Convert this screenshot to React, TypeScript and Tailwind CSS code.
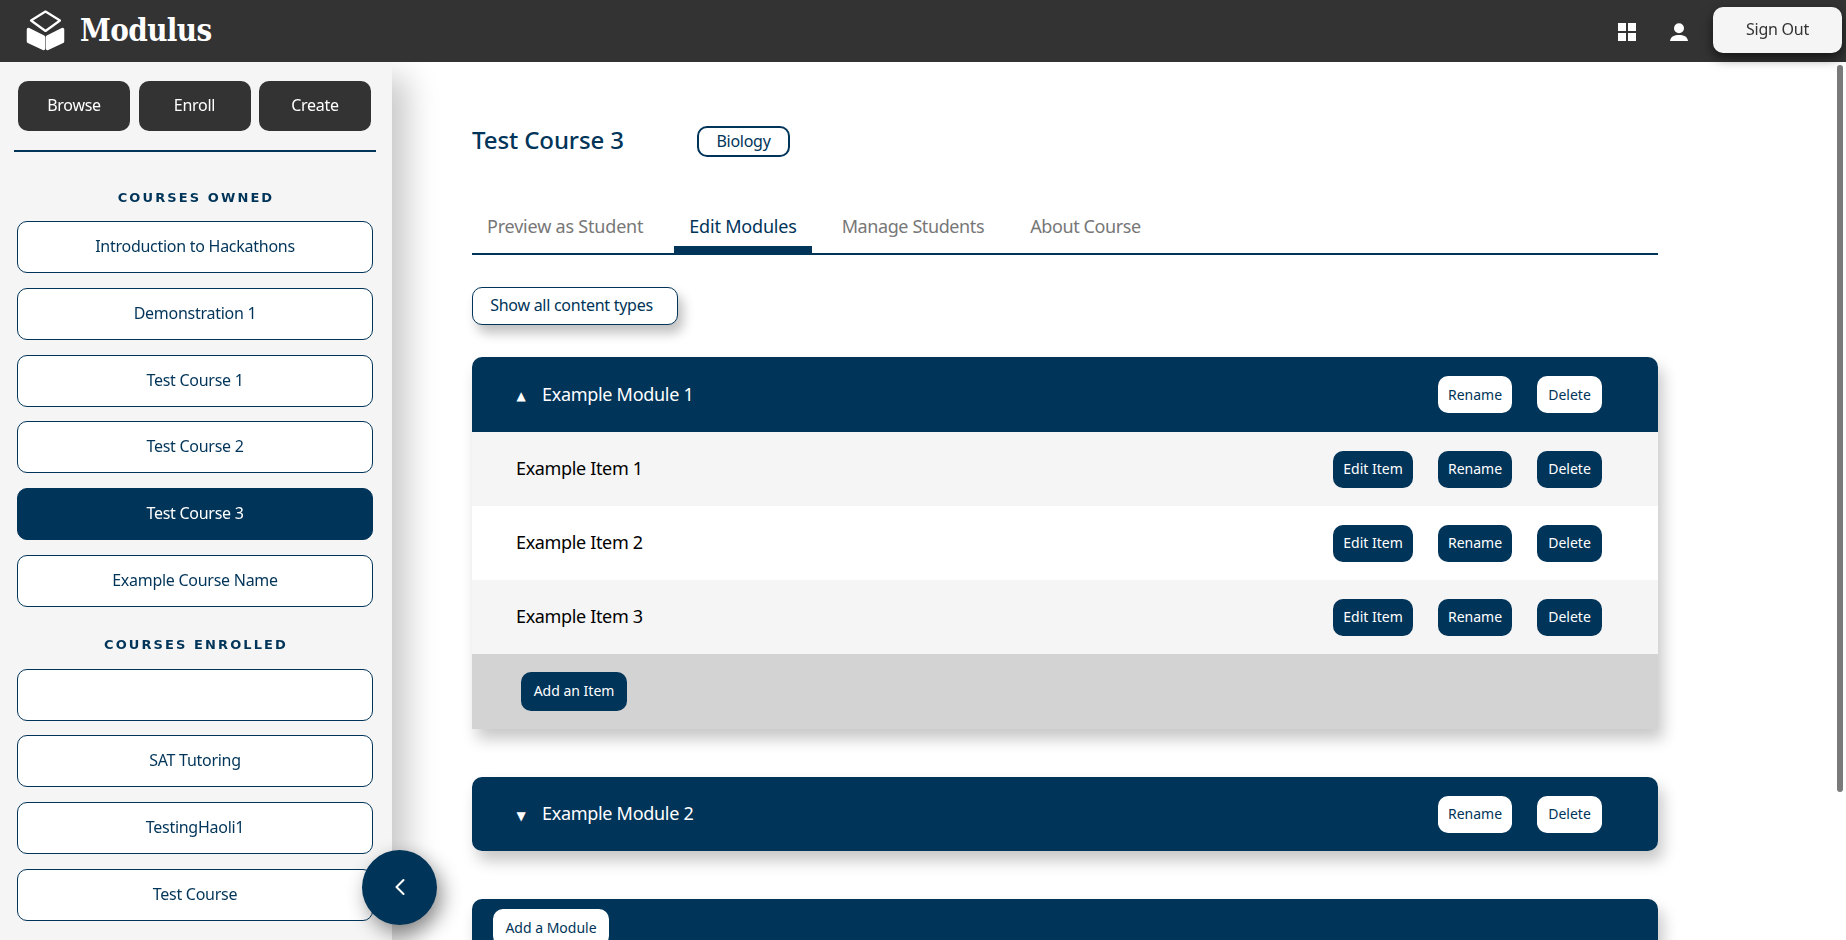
import { ChevronLeft } from "lucide-react";

const FONT = "font-['Noto_Sans',sans-serif]";

function LogoMark() {
  return (
    <svg width="39" height="41" viewBox="0 0 39 41" className="shrink-0 mb-[2px]">
      <path d="M19.5 1.5 L34 10.5 L19.5 21 L5 10.5 Z" fill="none" stroke="white" strokeWidth="2.2" strokeLinejoin="round" />
      <path d="M2.5 19.5 L17.5 27 L17.5 38.5 L2.5 31.5 Z" fill="white" stroke="white" strokeWidth="3.5" strokeLinejoin="round" />
      <path d="M21.5 27 L36.5 19.5 L36.5 31.5 L21.5 38.5 Z" fill="white" stroke="white" strokeWidth="3.5" strokeLinejoin="round" />
    </svg>
  );
}

function Header() {
  return (
    <header className="h-[62px] shrink-0 bg-[#333333] flex items-center justify-between pl-[26px] pr-[4px] relative z-20">
      <div className="flex items-center gap-[15px]">
        <LogoMark />
        <span className="font-['DejaVu_Serif',serif] font-bold [font-stretch:condensed] text-[31px] tracking-[-0.6px] text-white leading-none pb-[2px]">Modulus</span>
      </div>
      <div className="flex items-center">
        <svg width="18" height="18" viewBox="0 0 18 18" fill="white" className="mt-[2px]">
          <rect x="0" y="0" width="8" height="8" />
          <rect x="10" y="0" width="8" height="8" />
          <rect x="0" y="10" width="8" height="8" />
          <rect x="10" y="10" width="8" height="8" />
        </svg>
        <svg width="18" height="18" viewBox="0 0 18 18" fill="white" className="ml-[34px] mt-[2px]">
          <circle cx="9" cy="5.2" r="5" />
          <path d="M0 18 C0.5 13.5 4.5 12 9 12 C13.5 12 17.5 13.5 18 18 Z" />
        </svg>
        <button className="ml-[25px] mb-[2px] w-[129px] h-[46px] rounded-[10px] bg-[#f5f5f5] text-[#333333] text-[16px] tracking-[-0.27px] pb-[2px] shadow-[0_5px_12px_rgba(0,0,0,0.6)]">
          Sign Out
        </button>
      </div>
    </header>
  );
}

function CourseItem({ label, active }: { label: string; active?: boolean }) {
  return (
    <button
      className={
        active
          ? "h-[52px] w-full rounded-[10px] border border-[#003459] bg-[#003459] text-white text-[16px] tracking-[-0.27px] pb-[2px]"
          : "h-[52px] w-full rounded-[10px] border border-[#003459] bg-white text-[#003459] text-[16px] tracking-[-0.27px] pb-[2px]"
      }
    >
      {label}
    </button>
  );
}

function Sidebar() {
  const owned = ["Introduction to Hackathons", "Demonstration 1", "Test Course 1", "Test Course 2", "Test Course 3", "Example Course Name"];
  const enrolled = ["", "SAT Tutoring", "TestingHaoli1", "Test Course"];
  return (
    <aside className="w-[392px] shrink-0 bg-[#f5f5f5] relative z-10 shadow-[15px_15px_30px_rgba(0,0,0,0.22)] pt-[19px]">
      <div className="grid grid-cols-3 gap-[8.5px] mx-[18px] w-[353px]">
        {["Browse", "Enroll", "Create"].map((t) => (
          <button key={t} className="h-[50px] rounded-[10px] bg-[#333333] text-white text-[16px] tracking-[-0.27px] pb-[2px]">
            {t}
          </button>
        ))}
      </div>
      <div className="h-[2px] bg-[#003459] mx-[14px] w-[362px] mt-[19px]" />
      <h2 className="font-['DejaVu_Sans',sans-serif] font-bold text-[13px] leading-[20px] tracking-[2.1px] text-center text-[#003459] mt-[36px] mb-[13px]">
        COURSES OWNED
      </h2>
      <div className="flex flex-col gap-[14.8px] mx-[17px] w-[356px]">
        {owned.map((c) => (
          <CourseItem key={c} label={c} active={c === "Test Course 3"} />
        ))}
      </div>
      <h2 className="font-['DejaVu_Sans',sans-serif] font-bold text-[13px] leading-[20px] tracking-[2.1px] text-center text-[#003459] mt-[28px] mb-[13.7px]">
        COURSES ENROLLED
      </h2>
      <div className="flex flex-col gap-[14.8px] mx-[17px] w-[356px]">
        {enrolled.map((c, i) => (
          <CourseItem key={i} label={c} />
        ))}
      </div>
      <button className="absolute left-[362px] bottom-[15px] w-[75px] h-[75px] rounded-full bg-[#003459] flex items-center justify-center text-white shadow-[5px_8px_20px_rgba(0,0,0,0.45)]">
        <ChevronLeft size={28} strokeWidth={1.8} className="mb-[2px]" />
      </button>
    </aside>
  );
}

function NavyBtn({ label, w }: { label: string; w: string }) {
  return <button className={`${w} h-[37px] rounded-[10px] bg-[#003459] text-white text-[14px] pb-[2px]`}>{label}</button>;
}

function WhiteBtn({ label, w }: { label: string; w: string }) {
  return <button className={`${w} h-[37px] rounded-[10px] bg-white text-[#003459] text-[14px] pb-[1px]`}>{label}</button>;
}

function ModuleHeader({ title, arrow, h }: { title: string; arrow: string; h: string }) {
  return (
    <div className={`${h} bg-[#003459] rounded-t-[10px] flex items-center justify-between pl-[44px] pr-[56px] text-white`}>
      <div className="flex items-center gap-[16px]">
        <span className="font-['DejaVu_Sans',sans-serif] text-[12px] w-[10px] flex justify-center pt-[3px]">{arrow}</span>
        <span className="text-[18px] tracking-[-0.3px] pb-[1px]">{title}</span>
      </div>
      <div className="flex items-center gap-[25px]">
        <WhiteBtn label="Rename" w="w-[74px]" />
        <WhiteBtn label="Delete" w="w-[65px]" />
      </div>
    </div>
  );
}

function ItemRow({ label, shaded }: { label: string; shaded: boolean }) {
  return (
    <div className={shaded ? "h-[74px] bg-[#f5f5f5] flex items-center justify-between pl-[44px] pr-[56px]" : "h-[74px] bg-white flex items-center justify-between pl-[44px] pr-[56px]"}>
      <span className="text-[18px] tracking-[-0.35px] text-black pb-[2px]">{label}</span>
      <div className="flex items-center gap-[25px]">
        <NavyBtn label="Edit Item" w="w-[80px]" />
        <NavyBtn label="Rename" w="w-[74px]" />
        <NavyBtn label="Delete" w="w-[65px]" />
      </div>
    </div>
  );
}

function Main() {
  const moduleShadow = "shadow-[5px_10px_15px_rgba(0,0,0,0.22)]";
  const tab = "h-[45px] px-[15px] text-[18px] pb-[2px] border-b-[7px]";
  return (
    <main className="flex-1 min-w-0 bg-white overflow-y-auto">
      <div className="ml-[80px] w-[1186px] pt-[64px] pb-[141px]">
        <div className="flex items-center h-[31px]">
          <h1 className="text-[24px] font-medium text-[#003459] w-[225px] leading-none pb-[4px] tracking-[-0.1px]">Test Course 3</h1>
          <span className="w-[93px] h-[31px] rounded-[10px] border-2 border-[#003459] text-[#003459] text-[16px] tracking-[-0.27px] flex items-center justify-center pb-[1px]">
            Biology
          </span>
        </div>
        <nav className="flex gap-4 border-b-2 border-[#003459] mt-[51px]">
          <button className={`${tab} tracking-[-0.2px] text-[#777777] border-transparent`}>Preview as Student</button>
          <button className={`${tab} tracking-[-0.2px] text-[#003459] border-[#003459]`}>Edit Modules</button>
          <button className={`${tab} tracking-[-0.4px] text-[#777777] border-transparent -ml-[1px]`}>Manage Students</button>
          <button className={`${tab} tracking-[-0.4px] text-[#777777] border-transparent`}>About Course</button>
        </nav>
        <button className="mt-[32px] block w-[206px] h-[38px] rounded-[10px] border border-[#003459] bg-white text-[#003459] text-[16px] tracking-[-0.27px] pb-[2px] pr-[7px] shadow-[5px_8px_12px_rgba(0,0,0,0.25)]">
          Show all content types
        </button>

        <section className={`mt-[32px] rounded-t-[10px] ${moduleShadow}`}>
          <ModuleHeader title="Example Module 1" arrow="▲" h="h-[75px]" />
          <ItemRow label="Example Item 1" shaded />
          <ItemRow label="Example Item 2" shaded={false} />
          <ItemRow label="Example Item 3" shaded />
          <div className="h-[75px] bg-[#d3d3d3] flex items-center pl-[49px]">
            <button className="w-[106px] h-[39px] rounded-[10px] bg-[#003459] text-white text-[14px] pb-[2px]">Add an Item</button>
          </div>
        </section>

        <section className={`mt-[48px] rounded-[10px] ${moduleShadow}`}>
          <div className="rounded-b-[10px] overflow-hidden">
            <ModuleHeader title="Example Module 2" arrow="▼" h="h-[74px]" />
          </div>
        </section>

        <section className={`mt-[48px] h-[74px] rounded-[10px] bg-[#003459] pt-[10px] pl-[21px] ${moduleShadow}`}>
          <button className="w-[116px] h-[37px] rounded-[10px] bg-white text-[#003459] text-[14px]">Add a Module</button>
        </section>
      </div>
    </main>
  );
}

export default function App() {
  return (
    <div className={`h-screen w-full flex flex-col overflow-hidden bg-white ${FONT}`}>
      <Header />
      <div className="flex flex-1 min-h-0 relative">
        <Sidebar />
        <Main />
        <div className="absolute right-[3px] top-[3px] w-[6px] h-[727px] rounded-full bg-[#7a7a7a]" />
      </div>
    </div>
  );
}
